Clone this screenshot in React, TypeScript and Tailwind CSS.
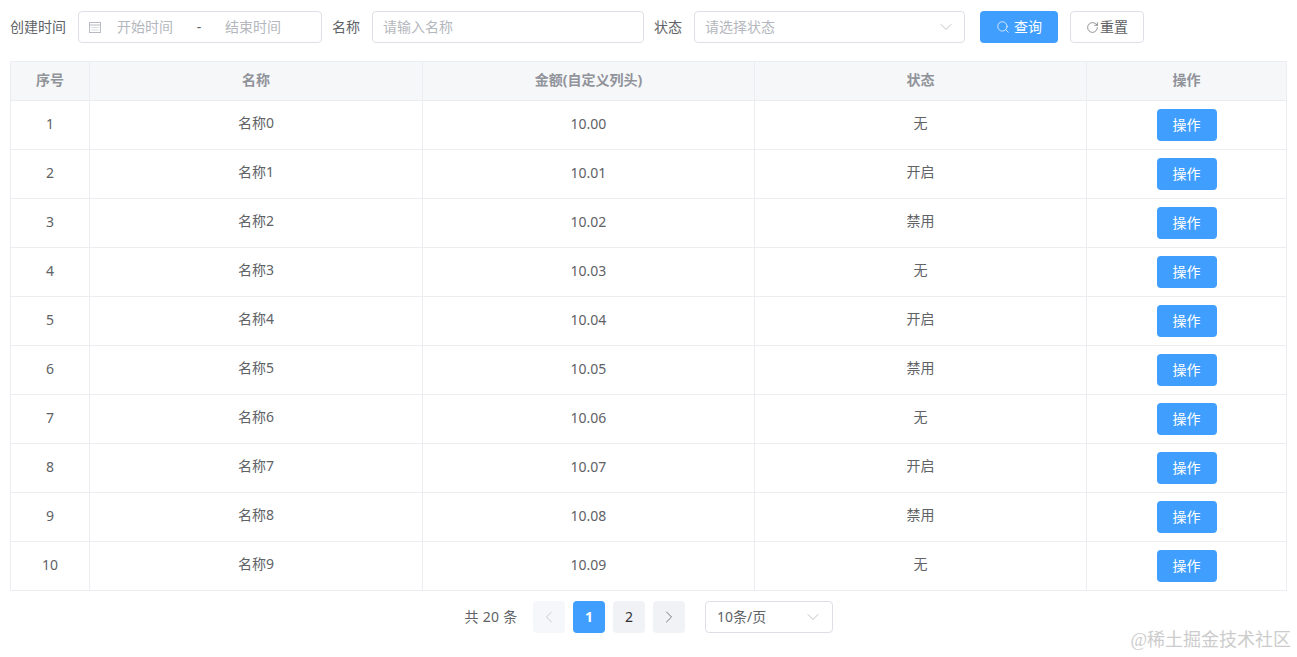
import { ChevronDown, ChevronLeft, ChevronRight, RotateCw, Search } from "lucide-react";

const statuses = ["无", "开启", "禁用"];
const rows = Array.from({ length: 10 }, (_, i) => ({
  no: i + 1,
  name: `名称${i}`,
  amount: (10 + i / 100).toFixed(2),
  status: statuses[i % 3],
}));

function CalendarIcon() {
  return (
    <svg width="14" height="14" viewBox="0 0 14 14" fill="none" stroke="#b8bbc2" strokeWidth="1">
      <rect x="1.5" y="2.5" width="11" height="10" />
      <path d="M1.5 5h11" />
      <path d="M3.5 7.5h7M3.5 10h7" strokeDasharray="1 1" />
    </svg>
  );
}

export default function App() {
  return (
    <div className="relative h-[657px] overflow-hidden bg-white px-2.5 pt-[11px] font-['Noto_Sans','Noto_Sans_CJK_SC',sans-serif] text-sm text-[#606266]">
      <form className="flex h-8 items-center">
        <label className="w-[68px] shrink-0">创建时间</label>
        <div className="flex h-8 w-[244px] items-center rounded border border-[#dcdfe6] pl-[9px] text-[#b4b7bd]">
          <CalendarIcon />
          <span className="ml-[8px] w-[70px] text-center">开始时间</span>
          <span className="w-[38px] text-center text-[#606266]">-</span>
          <span className="w-[70px] text-center">结束时间</span>
        </div>
        <label className="ml-2.5 w-10 shrink-0">名称</label>
        <div className="flex h-8 w-[272px] items-center rounded border border-[#dcdfe6] pl-[10px] text-[#b4b7bd]">请输入名称</div>
        <label className="ml-2.5 w-10 shrink-0">状态</label>
        <div className="flex h-8 w-[271px] items-center justify-between rounded border border-[#dcdfe6] pl-[10px] pr-[8px] text-[#b4b7bd]">
          请选择状态
          <ChevronDown size={20} strokeWidth={1} />
        </div>
        <button type="button" className="ml-[15px] flex h-8 w-[78px] items-center justify-center gap-1 rounded bg-[#409eff] text-white">
          <Search size={14} strokeWidth={1.25} />
          查询
        </button>
        <button type="button" className="ml-3 flex h-8 w-[74px] items-center justify-center gap-px rounded border border-[#dcdfe6] bg-white">
          <RotateCw size={13} strokeWidth={1.25} />
          重置
        </button>
      </form>

      <table className="mt-[18px] w-[1277px] table-fixed border-collapse border border-[#ebedf0] text-center">
        <colgroup>
          <col className="w-[79px]" />
          <col className="w-[333px]" />
          <col className="w-[332px]" />
          <col className="w-[332px]" />
          <col />
        </colgroup>
        <thead>
          <tr className="h-[39px] bg-[#f6f7f9] text-[#909399]">
            {["序号", "名称", "金额(自定义列头)", "状态", "操作"].map((title) => (
              <th key={title} className="border border-[#ebedf0] p-0 pb-[3px] font-bold">
                {title}
              </th>
            ))}
          </tr>
        </thead>
        <tbody>
          {rows.map((row) => (
            <tr key={row.no} className="h-[49px]">
              <td className="border border-[#ebedf0] p-0 pb-[3px]">{row.no}</td>
              <td className="border border-[#ebedf0] p-0 pb-[5px]">{row.name}</td>
              <td className="border border-[#ebedf0] p-0 pb-[3px]">{row.amount}</td>
              <td className="border border-[#ebedf0] p-0 pb-[5px]">{row.status}</td>
              <td className="border border-[#ebedf0] p-0">
                <button type="button" className="mx-auto flex h-8 w-[60px] items-center justify-center rounded bg-[#409eff] pb-px text-white">
                  操作
                </button>
              </td>
            </tr>
          ))}
        </tbody>
      </table>

      <div className="mt-2.5 flex h-8 items-center justify-center">
        <span className="mr-[15px] w-[54px] text-center tracking-[0.3px]">共 20 条</span>
        <button type="button" className="flex size-8 items-center justify-center rounded-sm bg-[#f5f7fa] text-[#c0c4cc]">
          <ChevronLeft size={20} strokeWidth={1} />
        </button>
        <button type="button" className="ml-2 flex size-8 items-center justify-center rounded-sm bg-[#409eff] font-bold text-white">1</button>
        <button type="button" className="ml-2 flex size-8 items-center justify-center rounded-sm bg-[#f0f2f5] text-[#303133]">2</button>
        <button type="button" className="ml-2 flex size-8 items-center justify-center rounded-sm bg-[#f0f2f5] text-[#606266]">
          <ChevronRight size={20} strokeWidth={1} />
        </button>
        <div className="ml-5 flex h-8 w-32 items-center justify-between rounded border border-[#dcdfe6] pl-[11px] pr-[9px]">
          10条/页
          <ChevronDown size={20} strokeWidth={1} className="text-[#b4b7bd]" />
        </div>
      </div>

      <div className="absolute right-[6px] top-[628px] font-['Liberation_Serif','Noto_Sans_CJK_SC',serif] text-[18px] text-[#cccccc]">@稀土掘金技术社区</div>
    </div>
  );
}
